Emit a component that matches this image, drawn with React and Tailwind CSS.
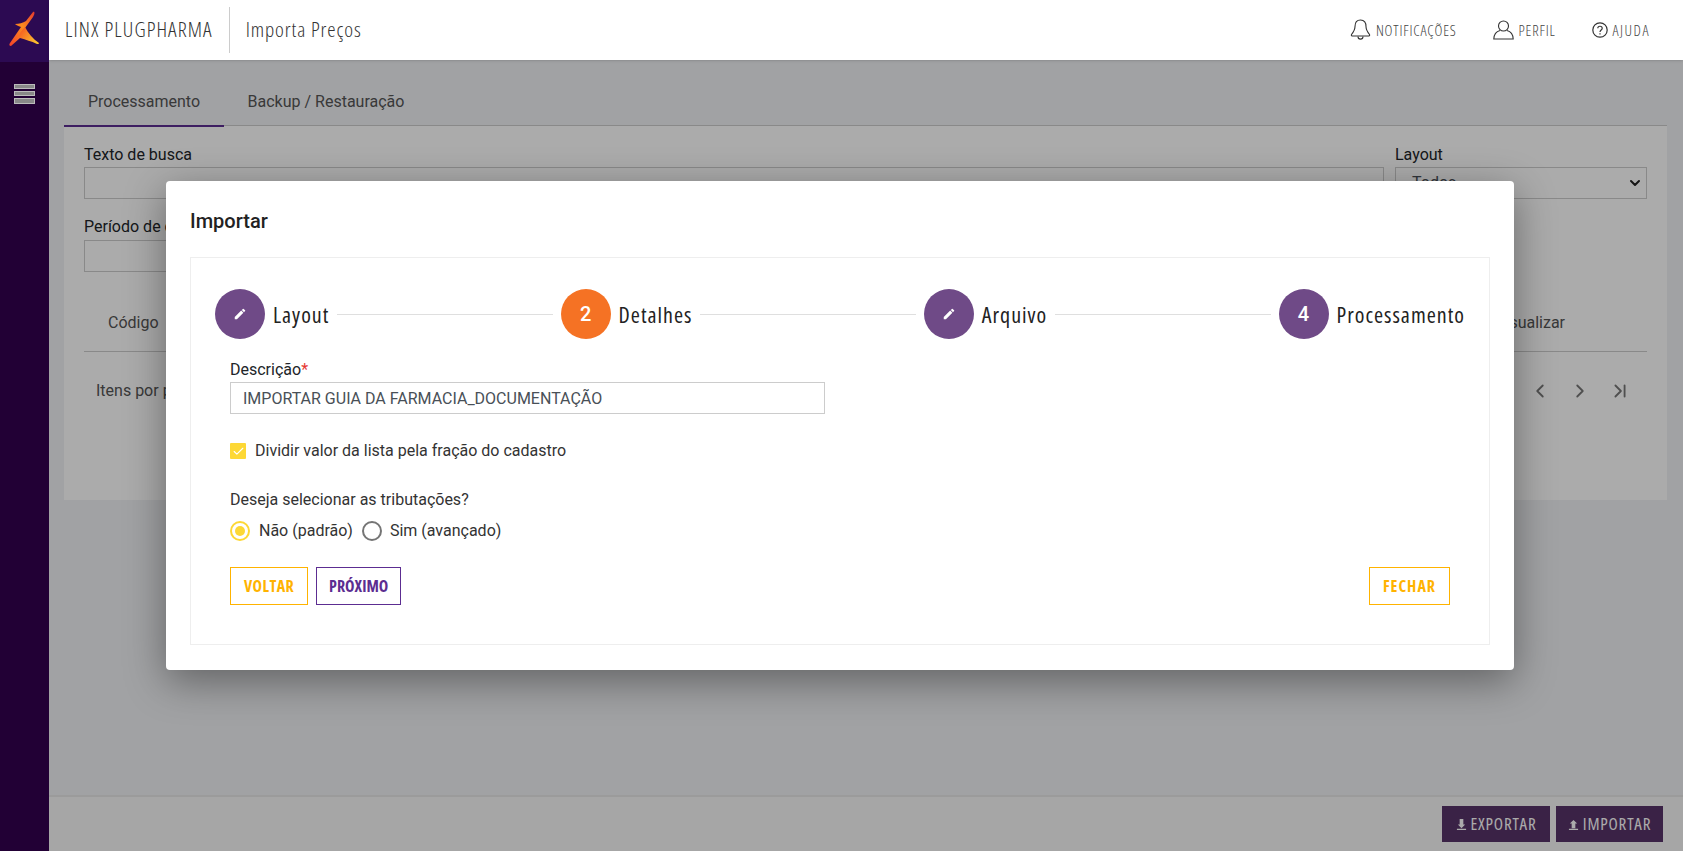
import React from "react";
import { ChevronDown, ChevronLeft, ChevronRight, ChevronLast, Check } from "lucide-react";

const dosis = "font-['Open_Sans','Noto_Sans',sans-serif] [font-stretch:75%]";

const Logo = () => (
  <svg width="49" height="62" viewBox="0 0 49 62">
    <defs>
      <linearGradient id="lg" x1="0" y1="1" x2="1" y2="0">
        <stop offset="0" stopColor="#f4402a" />
        <stop offset="0.55" stopColor="#fb8c1e" />
        <stop offset="1" stopColor="#e5392f" />
      </linearGradient>
      <linearGradient id="lg2" x1="0" y1="0" x2="1" y2="0.6">
        <stop offset="0" stopColor="#f5501e" />
        <stop offset="1" stopColor="#fcc02e" />
      </linearGradient>
    </defs>
    <path d="M33 12 C35 11 35 14 33 17 L25 28 L26 34 L20 38 L11 46 C9 46 9 44 10 43 L21 27 C18 26 16 25 15 24 C19 24 23 23 26 21 Z" fill="url(#lg)" />
    <path d="M25 27 C28 33 33 39 39 43 C39 44 38 44 37 44 C31 41 26 40 20 38 C18 35 22 30 25 27 Z" fill="url(#lg2)" />
  </svg>
);

const Pencil = () => (
  <svg width="14" height="14" viewBox="0 0 24 24" fill="#fff">
    <path d="M3 17.25V21h3.75L17.81 9.94l-3.75-3.75L3 17.25zM20.71 7.04a1 1 0 0 0 0-1.41l-2.34-2.34a1 1 0 0 0-1.41 0l-1.83 1.83 3.75 3.75 1.83-1.83z" />
  </svg>
);

const Step = ({ label, number, active }) => (
  <div className="flex items-center shrink-0">
    <div
      className={`w-[50px] h-[50px] rounded-full flex items-center justify-center text-white text-[20px] font-medium ${
        active ? "bg-[#f57224]" : "bg-[#6f4a87]"
      }`}
    >
      {number ? number : <Pencil />}
    </div>
    <span className={`ml-2 text-[22px] text-[#222] tracking-[1px] ${dosis}`}>{label}</span>
  </div>
);

const StepLine = () => <div className="flex-1 h-px bg-[#dfdfdf] mx-2" />;

const HeaderItem = ({ icon, label, spacing = "tracking-[0.8px]" }) => (
  <div className="flex items-center gap-[5px]">
    {icon}
    <span className={`text-[15px] font-light text-[#444] ${spacing} ${dosis}`}>{label}</span>
  </div>
);

const OutlineButton = ({ children, purple, spacing = "tracking-[0.4px]" }) => (
  <button
    className={`h-[38px] border bg-white text-[16px] font-bold ${spacing} ${dosis} ${
      purple ? "px-[12px] border-[#5c2d91] text-[#5c2d91]" : "px-[13px] border-[#ffb300] text-[#ffb300]"
    }`}
  >
    {children}
  </button>
);

const Fill = ({ children, width }) => (
  <button
    className={`h-[36px] justify-center bg-[#573369] text-white text-[17px] flex items-center gap-1 tracking-[0.8px] ${dosis} ${width}`}
  >
    {children}
  </button>
);

export default function App() {
  return (
    <div className="relative h-[851px] w-full overflow-hidden flex font-['Roboto',sans-serif] bg-[#f1f2f5]">
      {/* sidebar */}
      <aside className="relative z-20 w-[49px] shrink-0 bg-[#220035] flex flex-col items-center">
        <div className="w-full h-[62px] bg-[#2c0a52]">
          <Logo />
        </div>
        <div className="mt-[22px] flex flex-col gap-[2px]">
          <div className="w-[21px] h-[5px] border border-[#bbb] bg-[#888]" />
          <div className="w-[21px] h-[5px] border border-[#bbb] bg-[#888]" />
          <div className="w-[21px] h-[6px] border border-[#bbb] bg-[#888]" />
        </div>
      </aside>

      <div className="flex-1 min-w-0 flex flex-col">
        {/* header */}
        <header className="relative z-20 h-[60px] bg-white flex items-center pl-[16px] pr-[33px] shadow-sm">
          <span className={`text-[21px] font-light text-[#333] tracking-[1.1px] ${dosis}`}>LINX PLUGPHARMA</span>
          <div className="w-px h-[46px] bg-[#ccc] ml-[16px] mr-[16px]" />
          <span className={`text-[21px] font-light text-[#333] tracking-[0.9px] ${dosis}`}>Importa Preços</span>
          <div className="ml-auto flex items-center gap-[36px]">
            <HeaderItem
              icon={
                <svg width="21" height="22" viewBox="0 0 21 22" fill="none" stroke="#333" strokeWidth="1.1">
                  <path d="M10.5 1C6.5 1 5 4 5 7.5 C5 11 3.5 13 1.5 15.5 C1 16.5 1.5 17 3 17 H18 C19.5 17 20 16.5 19.5 15.5 C17.5 13 16 11 16 7.5 C16 4 14.5 1 10.5 1 Z" />
                  <path d="M8 17.5 C8 21 13 21 13 17.5" />
                </svg>
              }
              label="NOTIFICAÇÕES"
            />
            <HeaderItem
              icon={
                <svg width="21" height="20" viewBox="0 0 21 20" fill="none" stroke="#333" strokeWidth="1.1">
                  <circle cx="10.5" cy="6" r="5" />
                  <path d="M7 10.5 C3 11.5 1 14 0.8 19 H20.2 C20 14 18 11.5 14 10.5" />
                </svg>
              }
              label="PERFIL"
            />
            <HeaderItem
              spacing="tracking-[1.5px]"
              icon={
                <svg width="16" height="16" viewBox="0 0 16 16" fill="none" stroke="#333" strokeWidth="1.2">
                  <circle cx="8" cy="8" r="7.2" />
                  <path d="M5.8 6.2 C5.8 3.6 10.2 3.6 10.2 6.2 C10.2 8 8 8 8 10" />
                  <path d="M8 11.2v1.2" />
                </svg>
              }
              label="AJUDA"
            />
          </div>
        </header>

        {/* content */}
        <main className="flex-1 pl-[15px] pr-[16px] pt-[1px]">
          <div className="flex h-[65px] border-b border-[#ccc]">
            <div className="w-[160px] flex items-center justify-center pt-[17px] text-[16px] text-[#555] border-b-2 border-[#5c2d91] h-[66px]">
              Processamento
            </div>
            <div className="w-[204px] flex items-center justify-center pt-[17px] text-[16px] text-[#555] h-[65px]">
              Backup / Restauração
            </div>
          </div>
          <div className="bg-white h-[374px] px-[20px] pt-[18px]">
            <div className="flex gap-[11px]">
              <div className="flex-1">
                <div className="text-[16px] leading-[20px] pt-px h-[20px] text-[#212529]">Texto de busca</div>
                <div className="h-[32px] mt-[3px] border border-[#ccc]" />
              </div>
              <div className="w-[252px]">
                <div className="text-[16px] leading-[20px] pt-px h-[20px] text-[#212529]">Layout</div>
                <div className="h-[32px] mt-[3px] border border-[#ccc] flex items-center justify-between pl-[16px] pr-[3px] text-[16px] text-[#495057]">
                  Todos
                  <ChevronDown size={16} strokeWidth={3} color="#222" />
                </div>
              </div>
            </div>
            <div className="mt-[18px] w-[300px]">
              <div className="text-[16px] leading-[20px] text-[#212529]">Período de criação</div>
              <div className="h-[32px] mt-[3px] border border-[#ccc]" />
            </div>
            <div className="mt-[19px] h-[61px] border-b border-[#ccc] flex items-center justify-between px-[24px] pt-[3px] text-[16px] text-[#555]">
              <span>Código</span>
              <span className="mr-[58px]">Visualizar</span>
            </div>
            <div className="mt-[27px] flex items-center justify-between pl-[12px] pr-[16px] text-[16px] text-[#555]">
              <span>Itens por página</span>
              <div className="flex items-center gap-[18px] text-[#777]">
                <ChevronLeft size={22} strokeWidth={2} />
                <ChevronRight size={22} strokeWidth={2} />
                <ChevronLast size={22} strokeWidth={2} />
              </div>
            </div>
          </div>
        </main>

        {/* footer */}
        <footer className="h-[56px] shrink-0 bg-[#f8f8f8] border-t-2 border-[#e8e8e8] flex items-center justify-end gap-[6px] pr-[20px]">
          <Fill width="w-[108px]">
            <svg width="11" height="11" viewBox="0 0 12 12" fill="#fff">
              <path d="M4 0h4v6h2L6 10 2 6h2zM1 10.5h10V12H1z" />
            </svg>
            EXPORTAR
          </Fill>
          <Fill width="w-[107px]">
            <svg width="11" height="11" viewBox="0 0 12 12" fill="#fff">
              <path d="M6 1l4 4H8v5H4V5H2zM1 10.5h10V12H1z" />
            </svg>
            IMPORTAR
          </Fill>
        </footer>
      </div>

      {/* backdrop */}
      <div className="absolute left-[49px] top-[60px] right-0 bottom-0 z-10 bg-black/33" />

      {/* modal */}
      <div className="absolute inset-0 z-30 flex justify-center items-start pt-[181px] pr-[3px]">
        <div className="w-[1348px] h-[489px] bg-white rounded-[4px] shadow-[0_11px_40px_rgba(0,0,0,0.4)] px-[24px] pt-[28px]">
          <h2 className="text-[20px] leading-[24px] font-medium text-[#222]">Importar</h2>
          <div className="mt-[24px] h-[388px] border border-[#eeeeee] px-[24px] pt-[31px]">
            <div className="flex items-center">
              <Step label="Layout" />
              <StepLine />
              <Step label="Detalhes" number="2" active />
              <StepLine />
              <Step label="Arquivo" />
              <StepLine />
              <Step label="Processamento" number="4" />
            </div>

            <div className="pl-[15px] mt-[20px]">
              <div className="text-[16px] leading-[22px] text-[#212529]">
                Descrição<span className="text-[#e53935]">*</span>
              </div>
              <input
                readOnly
                value="IMPORTAR GUIA DA FARMACIA_DOCUMENTAÇÃO"
                className="block mt-[1px] w-[595px] h-[32px] border border-[#ccc] px-[12px] text-[16px] text-[#495057] outline-none"
              />

              <label className="mt-[26px] flex items-center gap-[9px] text-[16px] leading-[22px] text-[#333]">
                <span className="w-[16px] h-[16px] bg-[#fdd835] flex items-center justify-center rounded-[1px]">
                  <Check size={13} strokeWidth={2} color="#fff" />
                </span>
                Dividir valor da lista pela fração do cadastro
              </label>

              <div className="mt-[27px] text-[16px] leading-[22px] text-[#333]">Deseja selecionar as tributações?</div>

              <div className="mt-[9px] flex items-center text-[16px] leading-[22px] text-[#333]">
                <span className="w-[20px] h-[20px] rounded-full border-2 border-[#fdd835] flex items-center justify-center">
                  <span className="w-[10px] h-[10px] rounded-full bg-[#fdd835]" />
                </span>
                <span className="ml-[9px]">Não (padrão)</span>
                <span className="ml-[9px] w-[20px] h-[20px] rounded-full border-2 border-[#757575]" />
                <span className="ml-[8px]">Sim (avançado)</span>
              </div>

              <div className="mt-[25px] flex items-center gap-[8px] pr-[15px]">
                <OutlineButton>VOLTAR</OutlineButton>
                <OutlineButton purple spacing="tracking-[0px]">PRÓXIMO</OutlineButton>
                <div className="ml-auto">
                  <OutlineButton spacing="tracking-[1px]">FECHAR</OutlineButton>
                </div>
              </div>
            </div>
          </div>
        </div>
      </div>
    </div>
  );
}
